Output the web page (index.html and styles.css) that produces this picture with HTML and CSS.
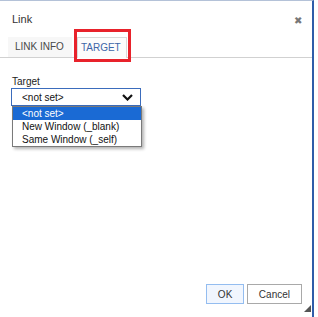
FILE: index.html
```html
<!DOCTYPE html>
<html lang="en">
<head>
    <meta charset="UTF-8">
    <title>Link</title>
    <link rel="stylesheet" href="styles.css">
</head>
<body>
    <div class="dialog">
        <div class="dialog-title">
            <span>Link</span>
            <span class="close">&#x2716;</span>
        </div>

        <div class="tabs">
            <div class="tab">LINK INFO</div>
            <div class="tab active">TARGET</div>
            <div class="highlight-box"></div>
        </div>

        <div class="dialog-body">
            <label class="field-label">Target</label>
            <div class="select-wrap">
                <div class="select">
                    <span>&lt;not set&gt;</span>
                    <svg class="chevron" width="11" height="7" viewBox="0 0 11 7">
                        <path d="M1 1 L5.5 5.5 L10 1" fill="none" stroke="#111" stroke-width="2.2"/>
                    </svg>
                </div>
                <ul class="options">
                    <li class="selected">&lt;not set&gt;</li>
                    <li>New Window (_blank)</li>
                    <li>Same Window (_self)</li>
                </ul>
            </div>
        </div>

        <div class="dialog-footer">
            <button class="btn btn-ok">OK</button>
            <button class="btn">Cancel</button>
        </div>

        <div class="resize-grip"></div>
    </div>
</body>
</html>
```

FILE: styles.css
```css
body {
    margin: 0;
    background: white;
    font-family: 'Liberation Sans', Arial, sans-serif;
    font-size: 10px;
    color: #333;
}
.dialog {
    position: relative;
    width: 314px;
    height: 317px;
    box-sizing: border-box;
    border-top: 1px solid #b4c2d8;
    border-right: 2px solid #2f5da9;
    display: flex;
    flex-direction: column;
}
.dialog-title {
    height: 36px;
    display: flex;
    align-items: center;
    justify-content: space-between;
    padding: 0 10px 0 12px;
    font-size: 11px;
    color: #333;
}
.close {
    font-size: 10px;
    color: #777;
    margin-top: 2px;
}
.tabs {
    position: relative;
    display: flex;
    align-items: flex-end;
    gap: 5px;
    padding-left: 8px;
    border-bottom: 1px solid #d1d1d1;
}
.tab {
    height: 20px;
    line-height: 20px;
    padding: 0 8px 0 7px;
    background: #f7f7f7;
    color: #484848;
}
.tab.active {
    padding: 0 5px 0 3px;
    background: #fcfcfc;
    color: #3d66a8;
    border: 1px solid #d9d9d9;
    border-bottom: none;
    margin-bottom: -1px;
    height: 21px;
    box-sizing: border-box;
}
.highlight-box {
    position: absolute;
    left: 74px;
    top: -8px;
    width: 57px;
    height: 33px;
    box-sizing: border-box;
    border: 3px solid #e8222b;
}
.dialog-body {
    flex: 1;
    padding: 18px 12px 0;
}
.field-label {
    display: block;
    line-height: 12px;
    color: #222;
}
.select-wrap {
    position: relative;
    margin-left: -1px;
    width: 130px;
}
.select {
    height: 18px;
    box-sizing: border-box;
    border: 1px solid #3b6cbc;
    display: flex;
    align-items: center;
    justify-content: space-between;
    padding: 0 7px 0 10px;
    color: #111;
}
.chevron {
    display: block;
}
.options {
    position: absolute;
    top: 18px;
    left: 1px;
    width: 128px;
    margin: 0;
    padding: 0;
    list-style: none;
    background: white;
    border: 1px solid #7a7a7a;
    box-shadow: 2px 2px 3px rgba(0,0,0,0.3);
}
.options li {
    height: 13px;
    line-height: 13px;
    padding-left: 9px;
    color: #111;
}
.options li.selected {
    background: #1a6ad4;
    color: white;
}
.dialog-footer {
    display: flex;
    justify-content: flex-end;
    gap: 3px;
    padding: 0 10px 13px 0;
}
.btn {
    height: 20px;
    padding: 0 11px;
    background: white;
    border: 1px solid #a9a9a9;
    font-family: 'Liberation Sans', Arial, sans-serif;
    font-size: 10px;
    color: #333;
}
.btn-ok {
    width: 38px;
    background: #f1f6fe;
    border-color: #94bdf0;
}
.resize-grip {
    position: absolute;
    right: 1px;
    bottom: 5px;
    width: 0;
    height: 0;
    border-left: 7px solid transparent;
    border-bottom: 7px solid #555;
}
```
